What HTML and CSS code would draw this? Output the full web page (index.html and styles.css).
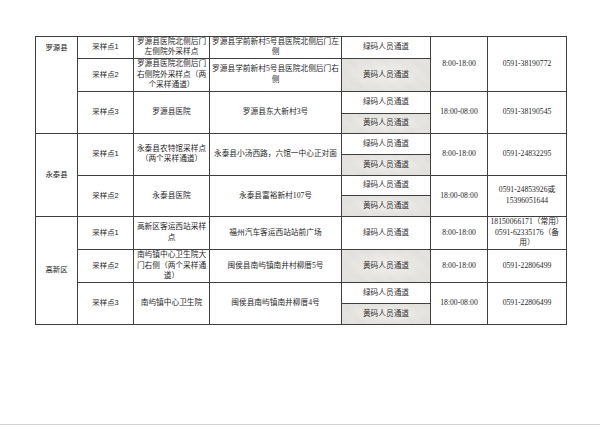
FILE: index.html
```html
<!DOCTYPE html>
<html lang="zh-CN">
<head>
<meta charset="utf-8">
<title>采样点</title>
<link rel="stylesheet" href="styles.css">
</head>
<body>
<div class="page">
  <div class="sheet">
    <table class="grid">
      <colgroup>
        <col class="c-area"><col class="c-pt"><col class="c-name"><col class="c-addr"><col class="c-ch"><col class="c-time"><col class="c-tel">
      </colgroup>
      <tbody>
        <tr class="h21">
          <td class="area top" rowspan="4">罗源县</td>
          <td class="pt">采样点1</td>
          <td>罗源县医院北侧后门<br>左侧院外采样点</td>
          <td>罗源县学前新村5号县医院北侧后门左<br>侧</td>
          <td class="green">绿码人员通道</td>
          <td rowspan="2">8:00-18:00</td>
          <td rowspan="2">0591-38190772</td>
        </tr>
        <tr class="h33">
          <td class="pt">采样点2</td>
          <td>罗源县医院北侧后门<br>右侧院外采样点（两<br>个采样通道）</td>
          <td>罗源县学前新村5号县医院北侧后门右<br>侧</td>
          <td class="yellow">黄码人员通道</td>
        </tr>
        <tr class="h22">
          <td class="pt" rowspan="2">采样点3</td>
          <td rowspan="2">罗源县医院</td>
          <td rowspan="2">罗源县东大新村3号</td>
          <td class="green">绿码人员通道</td>
          <td rowspan="2">18:00-08:00</td>
          <td rowspan="2">0591-38190545</td>
        </tr>
        <tr class="h20">
          <td class="yellow">黄码人员通道</td>
        </tr>

        <tr class="h21">
          <td class="area" rowspan="4">永泰县</td>
          <td class="pt" rowspan="2">采样点1</td>
          <td rowspan="2">永泰县农特馆采样点<br>（两个采样通道）</td>
          <td rowspan="2">永泰县小汤西路，六馆一中心正对面</td>
          <td class="green">绿码人员通道</td>
          <td rowspan="2">8:00-18:00</td>
          <td rowspan="2">0591-24832295</td>
        </tr>
        <tr class="h21">
          <td class="yellow">黄码人员通道</td>
        </tr>
        <tr class="h20">
          <td class="pt" rowspan="2">采样点2</td>
          <td rowspan="2">永泰县医院</td>
          <td rowspan="2">永泰县富裕新村107号</td>
          <td class="green">绿码人员通道</td>
          <td rowspan="2">18:00-08:00</td>
          <td rowspan="2">0591-24853926或<br>15396051644</td>
        </tr>
        <tr class="h21">
          <td class="yellow">黄码人员通道</td>
        </tr>

        <tr class="h33">
          <td class="area" rowspan="4">高新区</td>
          <td class="pt">采样点1</td>
          <td>高新区客运西站采样<br>点</td>
          <td>福州汽车客运西站站前广场</td>
          <td class="green">绿码人员通道</td>
          <td>8:00-18:00</td>
          <td>18150066171（常用）<br>0591-62335176（备<br>用）</td>
        </tr>
        <tr class="h33">
          <td class="pt">采样点2</td>
          <td>南屿镇中心卫生院大<br>门右侧（两个采样通<br>道）</td>
          <td>闽侯县南屿镇南井村柳厝5号</td>
          <td class="yellow">黄码人员通道</td>
          <td>8:00-18:00</td>
          <td>0591-22806499</td>
        </tr>
        <tr class="h21">
          <td class="pt" rowspan="2">采样点3</td>
          <td rowspan="2">南屿镇中心卫生院</td>
          <td rowspan="2">闽侯县南屿镇南井柳厝4号</td>
          <td class="green">绿码人员通道</td>
          <td rowspan="2">18:00-08:00</td>
          <td rowspan="2">0591-22806499</td>
        </tr>
        <tr class="h21">
          <td class="yellow">黄码人员通道</td>
        </tr>
      </tbody>
    </table>
  </div>
  <div class="edge"></div>
</div>
</body>
</html>
```

FILE: styles.css
```css
html, body {
  margin: 0;
  padding: 0;
  background: #ffffff;
}

.page {
  width: 600px;
  height: 425px;
  display: flex;
  flex-direction: column;
  overflow: hidden;
}

.sheet {
  flex: 1;
  padding: 36px 0 0 35px;
}

.edge {
  height: 1px;
  background: #d2d2d2;
}

.grid {
  border-collapse: collapse;
  table-layout: fixed;
  width: 531px;
  font-family: "Liberation Serif", "Noto Sans CJK SC", serif;
  font-size: 7.7px;
  line-height: 10.4px;
  color: #1f1f1f;
}

.c-area { width: 42px; }
.c-pt { width: 56px; }
.c-name { width: 76px; }
.c-addr { width: 132px; }
.c-ch { width: 89px; }
.c-time { width: 57px; }
.c-tel { width: 79px; }

.grid td {
  border: 1px solid #3f3f3f;
  padding: 0 1px;
  text-align: center;
  vertical-align: middle;
  white-space: nowrap;
  overflow: hidden;
}

.h20 { height: 20px; }
.h21 { height: 21px; }
.h22 { height: 22px; }
.h33 { height: 33px; }

.area,
.pt {
  font-family: "Liberation Sans", "Noto Sans CJK SC", sans-serif;
  font-size: 7.4px;
  color: #222222;
}

.area.top {
  vertical-align: top;
  padding-top: 6px;
}

.green {
  background: #ffffff;
  color: #333333;
}

.yellow {
  color: #333333;
  background-color: #e6e4e0;
  background-image:
    radial-gradient(ellipse at center, rgba(255,255,255,0.45) 0%, rgba(255,255,255,0) 70%),
    repeating-linear-gradient(45deg, rgba(0,0,0,0.025) 0 1px, rgba(255,255,255,0.03) 1px 2px);
}
```
